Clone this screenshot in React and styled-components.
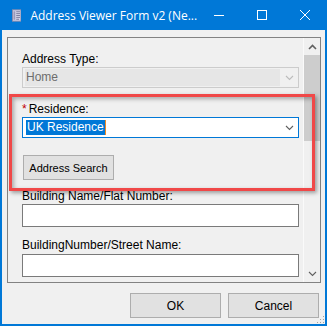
import React from 'react'
import styled, { createGlobalStyle } from 'styled-components'

const GlobalStyle = createGlobalStyle`
  html, body { margin: 0; padding: 0; background: #ffffff; }
  * { box-sizing: border-box; }
`

const UI = `"Liberation Sans", Arial, sans-serif`

const Window = styled.div`
  position: relative;
  width: 327px;
  height: 326px;
  display: flex;
  flex-direction: column;
  background: #f0f0f0;
  border: 2px solid #0078d7;
  border-top: none;
  font-family: ${UI};
  font-size: 12px;
  color: #000;
  overflow: hidden;
`

const TitleBar = styled.div`
  height: 30px;
  margin: 0 -2px;
  background: #0078d7;
  display: flex;
  align-items: center;
  color: #fff;
  flex-shrink: 0;
`

const TitleIcon = styled.svg`
  margin-left: 12px;
  width: 10px;
  height: 13px;
`

const TitleText = styled.div`
  margin-left: 9px;
  font-family: "Open Sans", "Noto Sans", sans-serif;
  font-size: 12px;
  flex: 1;
  white-space: nowrap;
`

const CtrlBtn = styled.div`
  width: 46px;
  height: 30px;
  display: flex;
  align-items: center;
  justify-content: center;
`

const Panel = styled.div`
  position: relative;
  margin: 7px 4px 0 5px;
  height: 246px;
  border: 1px solid #828282;
  display: flex;
  flex-shrink: 0;
`

const Content = styled.div`
  flex: 1;
  padding: 14px 0 0 14px;
  overflow: hidden;
  display: flex;
  flex-direction: column;
`

const Field = styled.div`
  margin-top: ${p => p.$mt || 0}px;
`

const Label = styled.div`
  line-height: 14px;
  height: 14px;
  white-space: nowrap;
`

const Star = styled.span`
  color: #c00000;
  margin-right: 2px;
`

const Combo = styled.div`
  margin-top: ${p => p.$mt || 1}px;
  width: 277px;
  height: 21px;
  display: flex;
  align-items: center;
  padding: 0 0 0 2px;
  background: ${p => (p.$disabled ? '#f0f0f0' : '#ffffff')};
  border: 1px solid ${p => (p.$disabled ? '#cccccc' : '#0078d7')};
`

const ComboText = styled.div`
  flex: 1;
  height: 17px;
  line-height: 17px;
  padding-left: 1px;
  background: ${p => (p.$disabled ? '#e6e6e6' : 'transparent')};
  color: ${p => (p.$disabled ? '#6d6d6d' : '#000')};
`

const Selected = styled.span`
  display: inline-block;
  background: #0078d7;
  color: #fff;
  line-height: 15px;
  padding: 0 1px 0 1px;
  border-right: 1px solid #f08a24;
`

const ArrowBox = styled.div`
  width: 17px;
  display: flex;
  align-items: center;
  justify-content: center;
  margin-left: 1px;
`

const TextBox = styled.div`
  margin-top: ${p => p.$mt || 1}px;
  width: 277px;
  height: 23px;
  background: #fff;
  border: 1px solid #7a7a7a;
`

const PushButton = styled.div`
  width: ${p => p.$w || 91}px;
  height: 25px;
  margin-top: ${p => p.$mt || 0}px;
  margin-left: ${p => p.$ml || 0}px;
  background: #e1e1e1;
  border: 1px solid #adadad;
  display: flex;
  align-items: center;
  justify-content: center;
  white-space: nowrap;
  font-size: ${p => p.$fs || 12}px;
`

const ScrollBar = styled.div`
  width: 17px;
  display: flex;
  flex-direction: column;
  background: #f0f0f0;
  border-left: 1px solid #fafafa;
`

const ScrollArrow = styled.div`
  height: 17px;
  display: flex;
  align-items: center;
  justify-content: center;
  flex-shrink: 0;
`

const Thumb = styled.div`
  height: 86px;
  background: #cdcdcd;
`

const Track = styled.div`
  flex: 1;
`

const Highlight = styled.div`
  position: absolute;
  left: 1px;
  top: 56px;
  width: 306px;
  height: 97px;
  border: 3px solid #f04848;
  box-shadow: 2px 2px 4px rgba(0, 0, 0, 0.35), inset 2px 2px 4px rgba(0, 0, 0, 0.3);
  pointer-events: none;
`

const ButtonRow = styled.div`
  margin-top: 10px;
  padding-right: 6px;
  display: flex;
  justify-content: flex-end;
  gap: 7px;
`

const Grip = styled.svg`
  position: absolute;
  right: 0;
  bottom: 0;
  width: 9px;
  height: 9px;
`

const Chevron = ({ color = '#606060', up }) => (
  <svg width="9" height="6" viewBox="0 0 9 6">
    <path
      d={up ? 'M1 5 L4.5 1.5 L8 5' : 'M1 1 L4.5 4.5 L8 1'}
      fill="none"
      stroke={color}
      strokeWidth={up ? 1.6 : 1.1}
    />
  </svg>
)

export default function App() {
  return (
    <>
      <GlobalStyle />
      <Window>
        <TitleBar>
          <TitleIcon viewBox="0 0 10 13">
            <rect x="0.5" y="0.5" width="9" height="12" fill="#d6d6ea" stroke="#8c8cac" />
            <rect x="1.5" y="2" width="2" height="9" fill="#9a9abc" />
            <path d="M4.5 2.5 H8.5 M4.5 4.5 H8.5 M4.5 6.5 H8.5 M4.5 8.5 H8.5 M4.5 10.5 H7.5" stroke="#7a7a9c" strokeWidth="1" />
          </TitleIcon>
          <TitleText>Address Viewer Form v2 (Ne...</TitleText>
          <CtrlBtn>
            <svg width="10" height="10" viewBox="0 0 10 10">
              <path d="M0 5.5 H10" stroke="#fff" strokeWidth="1" />
            </svg>
          </CtrlBtn>
          <CtrlBtn>
            <svg width="10" height="10" viewBox="0 0 10 10">
              <rect x="0.5" y="0.5" width="9" height="9" fill="none" stroke="#fff" strokeWidth="1" />
            </svg>
          </CtrlBtn>
          <CtrlBtn>
            <svg width="10" height="10" viewBox="0 0 10 10">
              <path d="M0 0 L10 10 M10 0 L0 10" stroke="#fff" strokeWidth="1" />
            </svg>
          </CtrlBtn>
        </TitleBar>

        <Panel>
          <Content>
            <Field>
              <Label>Address Type:</Label>
              <Combo $disabled>
                <ComboText $disabled>Home</ComboText>
                <ArrowBox>
                  <Chevron color="#bcbcbc" />
                </ArrowBox>
              </Combo>
            </Field>
            <Field $mt={14}>
              <Label>
                <Star>*</Star>Residence:
              </Label>
              <Combo>
                <ComboText>
                  <Selected>UK Residence</Selected>
                </ComboText>
                <ArrowBox>
                  <Chevron />
                </ArrowBox>
              </Combo>
            </Field>
            <PushButton $mt={17} $ml={1} $fs={11}>Address Search</PushButton>
            <Field $mt={9}>
              <Label>Building Name/Flat Number:</Label>
              <TextBox />
            </Field>
            <Field $mt={11}>
              <Label>BuildingNumber/Street Name:</Label>
              <TextBox $mt={2} />
            </Field>
          </Content>
          <ScrollBar>
            <ScrollArrow>
              <Chevron up />
            </ScrollArrow>
            <Thumb />
            <Track />
            <ScrollArrow>
              <Chevron />
            </ScrollArrow>
          </ScrollBar>
          <Highlight />
        </Panel>

        <ButtonRow>
          <PushButton>OK</PushButton>
          <PushButton>Cancel</PushButton>
        </ButtonRow>

        <Grip viewBox="0 0 9 9">
          {[[7, 1], [7, 4], [4, 4], [7, 7], [4, 7], [1, 7]].map(([x, y]) => (
            <rect key={`${x}-${y}`} x={x} y={y} width="1" height="1" fill="#a0a0a0" />
          ))}
        </Grip>
      </Window>
    </>
  )
}
